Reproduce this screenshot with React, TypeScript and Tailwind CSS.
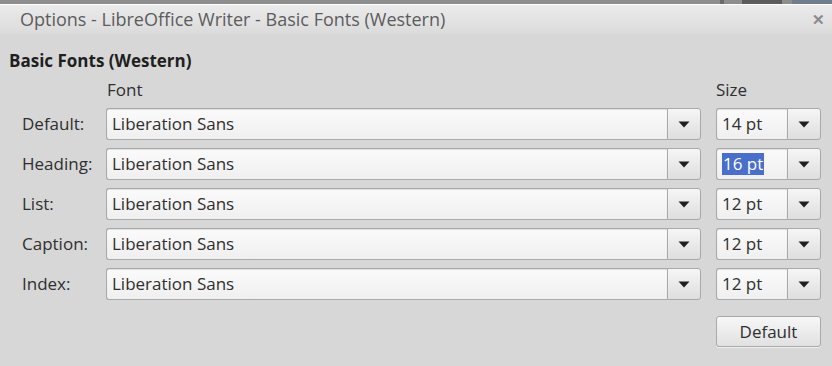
import React from "react";

const font = { fontFamily: '"Open Sans", "Noto Sans", sans-serif' };

const Arrow: React.FC = () => (
  <svg width="12" height="7" viewBox="0 0 12 7">
    <path d="M0.5 0.5 H11.5 L6 6.5 Z" fill="#1e1e1e" />
  </svg>
);

const Combo: React.FC<{ value: string; wide?: boolean; selected?: boolean }> = ({ value, wide, selected }) => (
  <div className={`flex h-[32px] ${wide ? "w-[595px]" : "w-[105px]"}`}>
    <div className="flex-1 flex items-center pl-[5px] rounded-l-[3px] border border-[#a9a9a9] border-r-0 bg-gradient-to-b from-[#fbfbfb] to-[#efefef] shadow-[inset_0_1px_1px_rgba(0,0,0,0.12)]">
      {selected ? (
        <span className="bg-[#4a6fca] text-white leading-[22px] px-[1px]">{value}</span>
      ) : (
        <span className="text-[#2f2f2f]">{value}</span>
      )}
    </div>
    <div className="w-[34px] flex items-center justify-center rounded-r-[3px] border border-[#a9a9a9] bg-gradient-to-b from-[#f6f6f6] to-[#dedede]">
      <Arrow />
    </div>
  </div>
);

const rows = [
  { label: "Default:", size: "14 pt" },
  { label: "Heading:", size: "16 pt", selected: true },
  { label: "List:", size: "12 pt" },
  { label: "Caption:", size: "12 pt" },
  { label: "Index:", size: "12 pt" },
];

export default function App() {
  return (
    <div className="w-[832px] h-[366px] overflow-hidden bg-[#d7d7d7] flex flex-col text-[17px]" style={font}>
      {/* strip from the window behind */}
      <div className="h-[4px] flex bg-[#8e8e8e]">
        <div className="w-[4px] bg-[#6a6a6a] ml-[720px]" />
        <div className="w-[40px] bg-[#5b5b5b] ml-[18px]" />
        <div className="w-[40px] bg-[#6f7d8c] ml-[10px]" />
      </div>

      {/* title bar */}
      <div className="h-[30px] border-t border-white bg-gradient-to-b from-[#ebebeb] to-[#dbdbdb] flex items-center justify-between pl-[20px] pr-[7px]">
        <span className="text-[#5c5c5c] text-[18px]">Options - LibreOffice Writer - Basic Fonts (Western)</span>
        <span className="text-[#8a8a8a] text-[15px] font-bold leading-none">✕</span>
      </div>

      <div className="pl-[9px] pt-[16px]">
        <div className="font-bold text-[#1f1f1f] leading-[22px]">Basic Fonts (Western)</div>
        <div className="flex text-[#2f2f2f] leading-[22px] mt-[7px]">
          <span className="ml-[98px] w-[609px]">Font</span>
          <span>Size</span>
        </div>
        <div className="flex flex-col gap-[8px] mt-[7px]">
          {rows.map((r) => (
            <div key={r.label} className="flex items-center">
              <span className="w-[97px] pl-[13px] text-[#2f2f2f]">{r.label}</span>
              <Combo value="Liberation Sans" wide />
              <div className="w-[15px]" />
              <Combo value={r.size} selected={r.selected} />
            </div>
          ))}
        </div>
        <div className="flex justify-end pr-[11px] mt-[16px]">
          <button className="w-[105px] h-[31px] rounded-[3px] border border-[#a9a9a9] bg-gradient-to-b from-[#f7f7f7] to-[#e1e1e1] text-[#2f2f2f] shadow-[0_1px_0_rgba(255,255,255,0.6)]">
            Default
          </button>
        </div>
      </div>
    </div>
  );
}
